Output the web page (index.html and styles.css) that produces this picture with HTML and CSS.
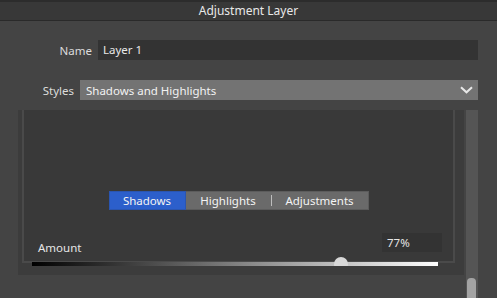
FILE: index.html
```html
<!DOCTYPE html>
<html>
<head>
<meta charset="utf-8">
<link rel="stylesheet" href="styles.css">
</head>
<body>
<div class="titlebar">Adjustment Layer</div>
<div class="row row-name">
  <span class="label">Name</span>
  <div class="input">Layer 1</div>
</div>
<div class="row row-styles">
  <span class="label">Styles</span>
  <div class="select">
    <span>Shadows and Highlights</span>
    <svg class="chev" width="13" height="8" viewBox="0 0 13 8"><path d="M1 1.2 L6.5 6.3 L12 1.2" fill="none" stroke="#e8e8e8" stroke-width="2"/></svg>
  </div>
</div>
<div class="scroll">
  <div class="content">
    <div class="group">
      <div class="tabs">
        <div class="tab active">Shadows</div>
        <div class="seg">
          <div class="tab t-high">Highlights</div>
          <div class="divider"></div>
          <div class="tab t-adj">Adjustments</div>
        </div>
      </div>
      <div class="amount">
        <span class="amount-label">Amount</span>
        <div class="value">77%</div>
      </div>
      <div class="slider">
        <div class="bar"></div>
        <div class="thumb"></div>
      </div>
    </div>
  </div>
  <div class="track"><div class="sthumb"></div></div>
</div>
</body>
</html>
```
FILE: styles.css
```css
html, body {
  margin: 0;
  padding: 0;
}
body {
  width: 497px;
  height: 298px;
  overflow: hidden;
  background: #444444;
  font-family: "Noto Sans", "Open Sans", sans-serif;
  font-size: 11.5px;
  color: #e2e2e2;
}
.titlebar {
  height: 18px;
  line-height: 18px;
  border-top: 2px solid #2c2c2c;
  border-bottom: 1px solid #2a2a2a;
  background: #383838;
  text-align: center;
  color: #e8e8e8;
  font-size: 12px;
}
.row {
  display: flex;
  justify-content: flex-end;
  align-items: center;
  padding-right: 19px;
  height: 20px;
}
.row-name { margin-top: 19px; }
.row-styles { margin-top: 20px; }
.label {
  margin-right: 6px;
  color: #dcdcdc;
}
.input {
  width: 375px;
  height: 20px;
  line-height: 20px;
  padding-left: 5px;
  background: #333333;
  color: #e8e8e8;
}
.select {
  width: 392px;
  height: 20px;
  padding-left: 6px;
  background: #737373;
  color: #f2f2f2;
  display: flex;
  align-items: center;
  justify-content: space-between;
}
.chev {
  margin-right: 5px;
}
.scroll {
  margin: 10px 19px 0 18px;
  height: 188px;
  display: flex;
  gap: 2px;
}
.content {
  width: 446px;
  height: 165px;
  background: #3c3c3c;
}
.group {
  margin: 0 9px 0 4px;
  height: 151px;
  background: #393939;
  border: 2px solid #4a4a4a;
  border-top: none;
  display: flex;
  flex-direction: column;
}
.group > * { flex-shrink: 0; }
.tabs {
  margin-top: 81px;
  align-self: center;
  display: flex;
  height: 19px;
}
.tab {
  height: 19px;
  line-height: 19px;
  text-align: center;
  color: #f4f4f4;
}
.tab.active {
  width: 75px;
  background: #2c5fcb;
  border: 1px solid #2a55b0;
  height: 17px;
  line-height: 17px;
}
.seg {
  display: flex;
  align-items: center;
  background: #6a6a6a;
  border: 1px solid #5c5c5c;
  border-left: none;
  height: 17px;
}
.seg .tab { height: 17px; line-height: 17px; }
.t-high { width: 85px; }
.divider {
  width: 1px;
  height: 11px;
  background: #bdbdbd;
}
.t-adj { width: 96px; }
.amount {
  margin-top: 23px;
  display: flex;
  justify-content: space-between;
  align-items: flex-end;
  padding: 0 11px 0 14px;
}
.amount-label {
  line-height: 14px;
  margin-bottom: -3px;
  color: #e6e6e6;
}
.value {
  width: 55px;
  height: 19px;
  line-height: 19px;
  padding-left: 5px;
  background: #333333;
  color: #e6e6e6;
}
.slider {
  position: relative;
  margin: 5px 15px 0 8px;
  height: 9px;
  overflow: hidden;
}
.bar {
  position: absolute;
  left: 0;
  right: 0;
  bottom: 0;
  height: 4px;
  background: linear-gradient(to right, #000000, #ffffff);
}
.thumb {
  position: absolute;
  left: 302px;
  top: 0;
  width: 14px;
  height: 14px;
  border-radius: 50%;
  background: #d8d8d8;
}
.track {
  width: 12px;
  height: 188px;
  background: #555555;
  position: relative;
}
.sthumb {
  position: absolute;
  left: 1px;
  top: 168px;
  width: 9px;
  height: 30px;
  border-radius: 4px 4px 0 0;
  background: #a3a3a3;
}
```
